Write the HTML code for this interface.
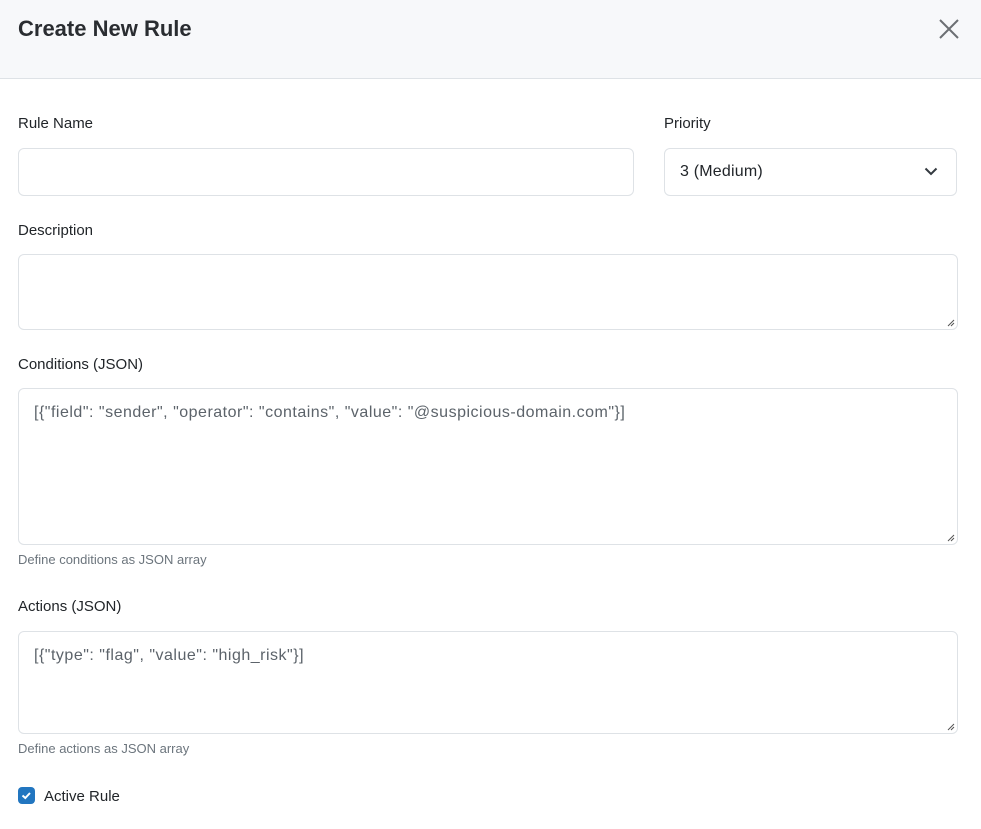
<!DOCTYPE html>
<html><head><style>
*{box-sizing:border-box;margin:0;padding:0}
body{width:981px;height:829px;background:#fff;font-family:"Liberation Sans",sans-serif;color:#212529;position:relative;overflow:hidden}
.hdr{position:absolute;left:0;top:0;width:981px;height:79px;background:#f7f8fa;border-bottom:1px solid #dee2e6}
.hdr h1{position:absolute;left:18px;top:16px;font-size:22px;font-weight:bold;color:#2a2d31}
.x{position:absolute;left:938px;top:18px}
.lbl{position:absolute;font-size:15px;color:#212529}
.box{position:absolute;border:1px solid #dee2e6;border-radius:6px;background:#fff}
.txt{position:absolute;font-size:16px;color:#5c636a;letter-spacing:0.5px}
.help{position:absolute;font-size:13px;color:#6c757d}
.grip{position:absolute;right:2px;bottom:2px}
</style></head><body>
<div class="hdr"><h1>Create New Rule</h1>
<svg class="x" width="22" height="22" viewBox="0 0 22 22"><path d="M2 2L20 20M20 2L2 20" stroke="#6c6f73" stroke-width="2"/></svg></div>

<div class="lbl" style="left:18px;top:115px">Rule Name</div>
<div class="box" style="left:18px;top:148px;width:616px;height:48px"></div>
<div class="lbl" style="left:664px;top:115px">Priority</div>
<div class="box" style="left:664px;top:148px;width:293px;height:48px"></div>
<div class="txt" style="left:680px;top:163px;color:#212529;letter-spacing:0.2px">3 (Medium)</div>
<svg style="position:absolute;left:924px;top:166px" width="14" height="10" viewBox="0 0 14 10"><path d="M1.5 2.5L7 8L12.5 2.5" fill="none" stroke="#343a40" stroke-width="2"/></svg>

<div class="lbl" style="left:18px;top:222px">Description</div>
<div class="box" style="left:18px;top:254px;width:940px;height:76px"><svg class="grip" width="9" height="9"><path d="M8 2L2 8M8 5L5 8" stroke="#555" stroke-width="1"/></svg></div>

<div class="lbl" style="left:18px;top:356px">Conditions (JSON)</div>
<div class="box" style="left:18px;top:388px;width:940px;height:157px"><svg class="grip" width="9" height="9"><path d="M8 2L2 8M8 5L5 8" stroke="#555" stroke-width="1"/></svg></div>
<div class="txt" style="left:34px;top:404px">[{"field": "sender", "operator": "contains", "value": "@suspicious-domain.com"}]</div>
<div class="help" style="left:18px;top:552px">Define conditions as JSON array</div>

<div class="lbl" style="left:18px;top:598px">Actions (JSON)</div>
<div class="box" style="left:18px;top:631px;width:940px;height:103px"><svg class="grip" width="9" height="9"><path d="M8 2L2 8M8 5L5 8" stroke="#555" stroke-width="1"/></svg></div>
<div class="txt" style="left:34px;top:647px">[{"type": "flag", "value": "high_risk"}]</div>
<div class="help" style="left:18px;top:741px">Define actions as JSON array</div>

<div style="position:absolute;left:18px;top:787px;width:17px;height:17px;background:#2276c0;border-radius:4px"><svg width="17" height="17"><path d="M4.5 8.5L7.3 11L12 6" fill="none" stroke="#fff" stroke-width="2"/></svg></div>
<div class="lbl" style="left:44px;top:788px">Active Rule</div>
</body></html>
